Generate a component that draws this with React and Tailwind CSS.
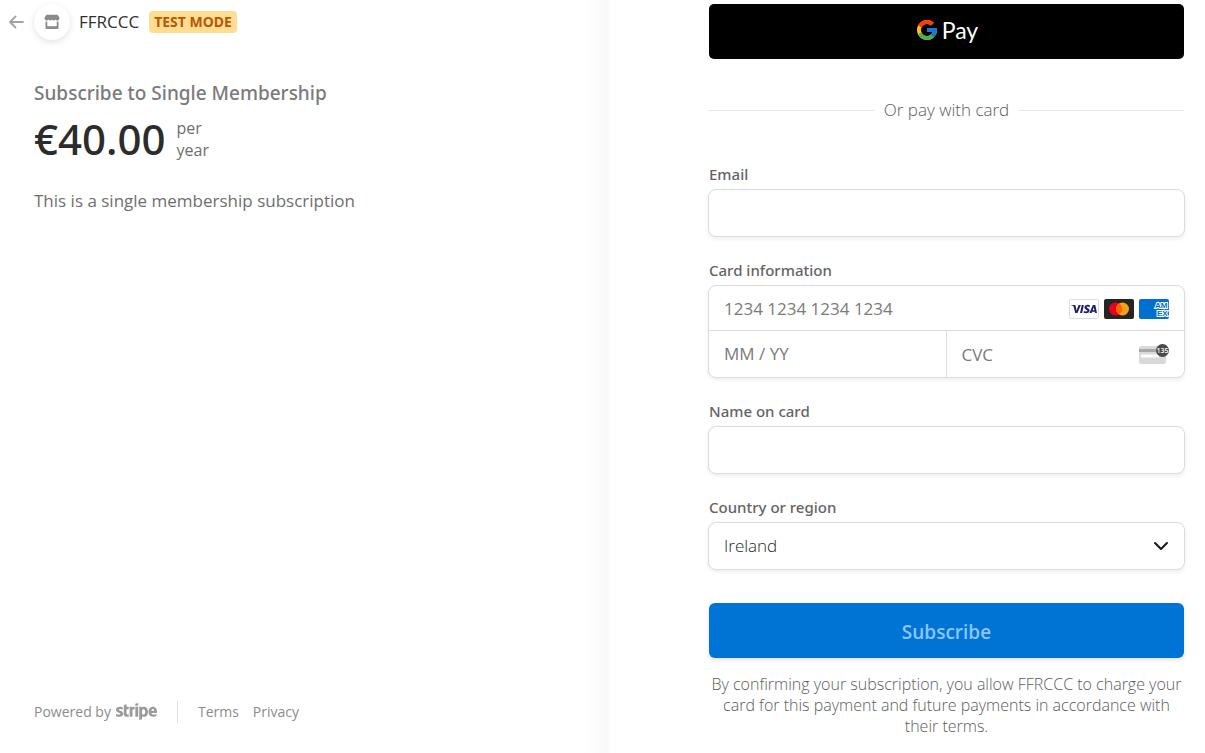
import { FcGoogle } from "react-icons/fc";
import { FaStripe } from "react-icons/fa6";
import { SiVisa } from "react-icons/si";

const fieldBox =
  "rounded-lg border border-[#dcdcdc] bg-white shadow-[0_2px_4px_rgba(0,0,0,0.07)]";
const inputText =
  "min-w-0 bg-transparent text-[17px] leading-6 text-[#1f1f28] placeholder:text-[#7a7a7a] outline-none";
const labelText = "mb-[5px] block font-['Noto_Sans',sans-serif] text-[15px] leading-5 font-medium text-[#646464]";

function BackArrow() {
  return (
    <svg viewBox="0 0 16 16" className="size-4" fill="none" stroke="#a3a3a3" strokeWidth="1.8" strokeLinecap="round" strokeLinejoin="round" aria-hidden="true">
      <path d="M15 8H2M7.5 2.500 2 8l5.500 5.500" />
    </svg>
  );
}

function StoreIcon() {
  return (
    <svg viewBox="0 0 16 16" className="size-4" fill="#8a8a8a" aria-hidden="true">
      <path d="M3 .8h10c.5 0 .9.200 1.100.6L15.400 3.600v.9a2 2 0 0 1-3.800.9 2.100 2.100 0 0 1-3.600 0 2.100 2.100 0 0 1-3.600 0A2 2 0 0 1 .6 4.500v-.9l1.300-2.200c.2-.4.6-.6 1.100-.6Z" />
      <path d="M1.500 7.500h1.800v4.700h9.400V7.500h1.800V14a1 1 0 0 1-1 1h-11a1 1 0 0 1-1-1Z" />
    </svg>
  );
}

function Visa() {
  return (
    <span className="flex h-5 w-[30px] items-center justify-center rounded-[2px] border border-[#dcdce4] bg-white">
      <SiVisa className="size-[26px] text-[#1a1f71]" aria-label="Visa" />
    </span>
  );
}

function Mastercard() {
  return (
    <svg viewBox="0 0 30 20" className="h-5 w-[30px]" role="img" aria-label="Mastercard">
      <rect width="30" height="20" rx="2" fill="#252525" />
      <circle cx="11.500" cy="10" r="6.500" fill="#eb001b" />
      <circle cx="18.500" cy="10" r="6.500" fill="#f79e1b" />
      <path d="M15 4.520a6.500 6.500 0 0 1 0 10.960 6.500 6.500 0 0 1 0-10.960Z" fill="#ff5f00" />
    </svg>
  );
}

function Amex() {
  return (
    <svg viewBox="0 0 30 20" className="h-5 w-[30px]" role="img" aria-label="American Express">
      <clipPath id="amex-card">
        <rect width="30" height="20" rx="2" />
      </clipPath>
      <g clipPath="url(#amex-card)">
        <rect width="30" height="20" fill="#016fd0" />
        <g fontFamily="Liberation Sans, sans-serif" fontWeight="700" fontSize="8" fill="#016fd0" stroke="#ffffff" strokeWidth="2" paintOrder="stroke">
          <text x="16" y="9">AM</text>
          <text x="18" y="16.500">EX</text>
        </g>
      </g>
    </svg>
  );
}

function CvcCard() {
  return (
    <svg viewBox="0 0 30 20" className="h-5 w-[30px]" aria-hidden="true">
      <rect y="2" width="27" height="18" rx="2" fill="#d9d9d9" />
      <rect y="5" width="27" height="3" fill="#a8a8a8" />
      <rect x="2" y="10.500" width="18" height="3" fill="#ffffff" />
      <circle cx="23.500" cy="6.500" r="6.500" fill="#4a4a4a" />
      <text x="23.500" y="9" textAnchor="middle" fontFamily="Open Sans, sans-serif" fontWeight="600" fontSize="7" fill="#ffffff">135</text>
    </svg>
  );
}

function Chevron() {
  return (
    <svg viewBox="0 0 16 16" className="pointer-events-none absolute top-1/2 right-[15px] size-4 -translate-y-1/2" fill="none" stroke="#1a1a1a" strokeWidth="2" strokeLinecap="round" strokeLinejoin="round" aria-hidden="true">
      <path d="m2 5 6 6 6-6" />
    </svg>
  );
}

function Summary() {
  return (
    <section className="flex flex-col bg-linear-to-l from-[#f9f9f9] to-white to-[26px] pt-1 pl-[34px] pb-[25px]">
      <header className="-ml-[26px] flex h-9 items-center">
        <a href="#back" aria-label="Back">
          <BackArrow />
        </a>
        <span className="ml-2.5 flex size-9 items-center justify-center rounded-full bg-white shadow-[0_2px_6px_rgba(0,0,0,0.12)]">
          <StoreIcon />
        </span>
        <span className="ml-[9px] text-[17px] leading-6 text-[#303030]">FFRCCC</span>
        <span className="ml-2.5 rounded-[4px] bg-[#ffde92] px-[5px] font-['Noto_Sans',sans-serif] text-sm leading-[22px] font-bold text-[#bb5504]">
          TEST MODE
        </span>
      </header>

      <h1 className="mt-10 font-['Noto_Sans',sans-serif] text-[19px] leading-[26px] font-medium text-[#7a7a7a]">
        Subscribe to Single Membership
      </h1>
      <div className="mt-[3px] flex items-center">
        <span className="font-['Noto_Sans',sans-serif] text-[42px] leading-[60px] font-medium text-[#2c2c2c]">€40.00</span>
        <span className="ml-[11px] w-10 text-base leading-[22px] text-[#6e6e6e]">per year</span>
      </div>
      <p className="mt-5 text-[17px] leading-6 text-[#6e6e6e]">
        This is a single membership subscription
      </p>

      <footer className="mt-auto flex items-center text-sm text-[#8c8c8c]">
        <a href="#stripe" className="flex items-center gap-[5px]">
          Powered by
          <FaStripe className="h-[33px] w-[41px] text-[#9a9a9a]" aria-label="Stripe" />
        </a>
        <span className="mr-5 ml-5 h-[22px] w-px bg-[#dedede]" />
        <a href="#terms">Terms</a>
        <a href="#privacy" className="ml-3.5">Privacy</a>
      </footer>
    </section>
  );
}

function PaymentForm() {
  return (
    <form className="pt-1 pr-[21px] pb-4 pl-[100px]" onSubmit={(e) => e.preventDefault()}>
      <button type="button" aria-label="Google Pay" className="flex h-[55px] w-full items-center justify-center gap-[3px] rounded-[5px] bg-black pb-1 text-white">
        <FcGoogle className="size-6" />
        <span className="font-['Lato',sans-serif] text-[23px] leading-7">Pay</span>
      </button>

      <div className="mt-[39px] flex items-center gap-2.5 text-[17px] leading-6 font-light text-[#5c5c5c]">
        <span className="h-px flex-1 bg-[#e4e4e4]" />
        Or pay with card
        <span className="h-px flex-1 bg-[#e4e4e4]" />
      </div>

      <div className="mt-[42px]">
        <label htmlFor="email" className={labelText}>Email</label>
        <div className={`-mx-px flex h-12 ${fieldBox}`}>
          <input id="email" type="email" className={`flex-1 px-[15px] ${inputText}`} />
        </div>
      </div>

      <fieldset className="mt-[23px]">
        <legend className={labelText}>Card information</legend>
        <div className={`-mx-px ${fieldBox}`}>
          <div className="flex h-[45px] items-center border-b border-[#dcdcdc] pt-px pr-[15px]">
            <input aria-label="Card number" placeholder="1234 1234 1234 1234" className={`h-full flex-1 px-[15px] ${inputText}`} />
            <span className="flex gap-[5px]">
              <Visa />
              <Mastercard />
              <Amex />
            </span>
          </div>
          <div className="grid h-[46px] grid-cols-2">
            <input aria-label="Expiration" placeholder="MM / YY" className={`border-r border-[#dcdcdc] px-[15px] ${inputText}`} />
            <div className="flex min-w-0 items-center pr-[15px]">
              <input aria-label="CVC" placeholder="CVC" className={`h-full flex-1 px-[15px] ${inputText}`} />
              <CvcCard />
            </div>
          </div>
        </div>
      </fieldset>

      <div className="mt-[23px]">
        <label htmlFor="name" className={labelText}>Name on card</label>
        <div className={`-mx-px flex h-12 ${fieldBox}`}>
          <input id="name" className={`flex-1 px-[15px] ${inputText}`} />
        </div>
      </div>

      <div className="mt-[23px]">
        <label htmlFor="country" className={labelText}>Country or region</label>
        <div className={`relative -mx-px flex h-12 ${fieldBox}`}>
          <select id="country" defaultValue="Ireland" className={`flex-1 appearance-none px-[15px] font-light ${inputText}`}>
            <option>Ireland</option>
            <option>United Kingdom</option>
          </select>
          <Chevron />
        </div>
      </div>

      <button type="submit" className="mt-[33px] h-[55px] w-full rounded-md bg-[#0074d4] pt-0.5 text-[19px] leading-6 font-semibold text-[#8cc6f8] shadow-[0_2px_4px_rgba(0,0,0,0.12)]">
        Subscribe
      </button>
      <p className="mt-4 text-center text-base leading-[21px] font-light text-[#5c5c5c]">
        By confirming your subscription, you allow FFRCCC to charge your card for this payment and
        future payments in accordance with their terms.
      </p>
    </form>
  );
}

export default function App() {
  return (
    <main className="grid min-h-screen grid-cols-[609fr_596fr] bg-white font-['Open_Sans','Noto_Sans',sans-serif]">
      <Summary />
      <PaymentForm />
    </main>
  );
}
